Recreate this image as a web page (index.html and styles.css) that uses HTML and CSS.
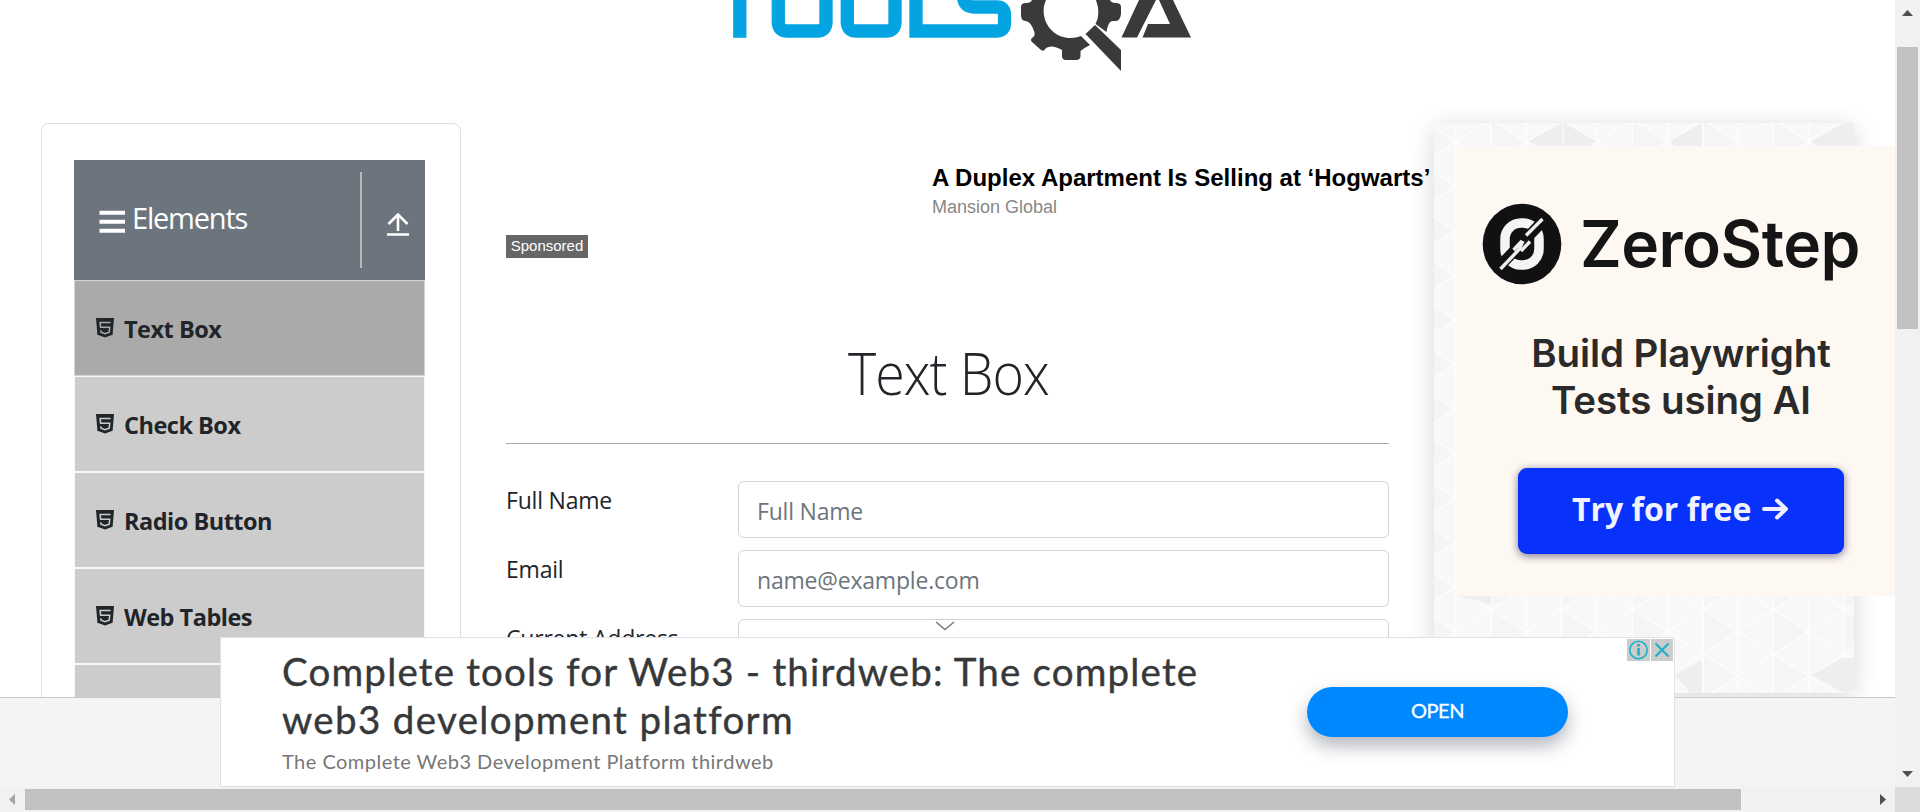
FILE: index.html
```html
<!DOCTYPE html>
<html lang="en">
<head>
<meta charset="utf-8">
<title>ToolsQA - Text Box</title>
<link rel="stylesheet" href="styles.css">
</head>
<body>
<svg width="0" height="0" class="defs">
  <symbol id="html5" viewBox="0 0 18 20"><path d="M0 0H18L16.6 16.8L9 19.5L1.4 16.8Z" fill="#212529"/><path d="M14.6 4.400H4.100L4.600 9.200H13.700L13.200 14.200L9 15.600L5 14.200L4.800 12.200" fill="none" stroke="var(--ink)" stroke-width="1.500"/></symbol>
</svg>
<div class="window">
  <div class="view">
    <header class="top">
      <svg class="logo" width="470" height="75" viewBox="730 0 470 75">
        <g fill="none" stroke="#04a3e1" stroke-width="13.3">
          <path d="M739.800 0V37.800"/>
          <path d="M778.300 0V22Q778.300 31 787.300 31H817Q826 31 826 22V0"/>
          <path d="M847.300 0V22Q847.300 31 856.300 31H886Q895 31 895 22V0"/>
          <path d="M916 0V31H997Q1004.500 31 1004.500 23V15Q1004.500 7 997 7H974Q963.500 7 963.500 -4"/>
        </g>
        <g fill="#3a3a3a">
          <path d="M1046 0A27 27 0 0 0 1081 36L1090 45Q1084 48 1080.500 51V56Q1080.500 60 1076 60H1066Q1062 60 1062 56V50Q1052 44 1046 48Q1044 52 1041 50L1032 42Q1030 40 1032 38Q1036 36 1034 31Q1031 22 1026 21Q1021 21 1021 15V7Q1021 3 1026 3Q1031 3 1032 0Z"/>
          <path d="M1096 0Q1101 14 1095.500 24L1106.500 32Q1108 22 1112 21H1116Q1120 21 1121 14V7Q1121 3 1116 3Q1111 3 1110 0Z"/>
          <path d="M1095 25L1121 50V71L1085.500 34Z"/>
          <path d="M1136 0H1156L1137 37.500H1121.500L1139 0Z"/>
          <path d="M1159 0H1173L1191 37.500H1142.500L1148 24H1170Z"/>
        </g>
      </svg>
    </header>
    <div class="columns">
      <nav class="side">
        <div class="side-head">
          <svg width="27" height="24" viewBox="0 0 27 24"><path d="M0.500 2.700H26M0.500 11.700H26M0.500 20.700H26" stroke="#fff" stroke-width="4"/></svg>
          <span class="side-title">Elements</span>
          <span class="divider"></span>
          <svg class="up" width="22" height="24" viewBox="0 0 22 24"><path d="M11 18V1.500M1.500 11L11 1.500L20.500 11M0 21.500H22" fill="none" stroke="#fff" stroke-width="2.600"/></svg>
        </div>
        <ul class="menu">
          <li class="item active"><svg width="18" height="20"><use href="#html5"/></svg><span>Text Box</span></li>
          <li class="item"><svg width="18" height="20"><use href="#html5"/></svg><span>Check Box</span></li>
          <li class="item"><svg width="18" height="20"><use href="#html5"/></svg><span>Radio Button</span></li>
          <li class="item"><svg width="18" height="20"><use href="#html5"/></svg><span>Web Tables</span></li>
          <li class="item"></li>
        </ul>
      </nav>
      <main class="main">
        <section class="native">
          <h2>A Duplex Apartment Is Selling at ‘Hogwarts’</h2>
          <p>Mansion Global</p>
          <span class="tag">Sponsored</span>
        </section>
        <h1><span>Text Box</span></h1>
        <form class="form">
          <label>Full Name</label><input placeholder="Full Name">
          <label>Email</label><input placeholder="name@example.com">
          <label>Current Address</label><input>
        </form>
      </main>
      <aside class="rail">
        <svg class="pattern" width="420" height="570">
          <defs>
            <pattern id="tri" x="57" y="-3.600" width="70.600" height="44.550" patternUnits="userSpaceOnUse">
              <rect width="70.600" height="44.550" fill="#f8f8f8"/>
              <path d="M0 0L35.300 22.300L0 44.550Z" fill="#f5f5f5"/>
              <path d="M0 0V44.550M35.300 0V44.550M70.600 0V44.550M0 0L70.600 44.550M70.600 0L0 44.550" stroke="#fdfdfd" stroke-width="1.800" fill="none"/>
            </pattern>
          </defs>
          <rect width="420" height="570" fill="url(#tri)"/>
          <path d="M95 18L128 0V23H103ZM130 0L162 18L156 23H130ZM236 18L268 0V23H240ZM377 18L410 0H420V23H382ZM241 552L268 537V570H256ZM377 552L409 535H420V568L410 570ZM24 473H57V481Z" fill="#eee"/>
        </svg>
        <div class="zs">
          <div class="zs-brand">
            <svg width="80" height="82" viewBox="0 0 80 82"><ellipse cx="40" cy="41" rx="39.300" ry="40.300" fill="#111"/><rect x="23" y="20" width="34" height="42" rx="16" fill="none" stroke="#f4f4f4" stroke-width="9.500"/><path d="M16 65L62 17" stroke="#111" stroke-width="11"/><path d="M18.500 66L37 46.500L41 38M31.500 47L40 38M44 32.500L60.500 16M39 48L48 38.500" fill="none" stroke="#eee" stroke-width="3.400"/></svg>
            <span>ZeroStep</span>
          </div>
          <p class="zs-l1">Build Playwright</p>
          <p class="zs-l2">Tests using AI</p>
          <div class="zs-btn"><span>Try for free</span><svg width="27" height="22" viewBox="0 0 27 22"><path d="M2 11H24M15 2.500L24 11L15 19.500" fill="none" stroke="#eef" stroke-width="4" stroke-linecap="round" stroke-linejoin="round"/></svg></div>
        </div>
      </aside>
    </div>
    <footer class="foot"></footer>
    <svg class="chev" width="20" height="10" viewBox="0 0 20 10"><path d="M1 1L10 8.500L19 1" fill="none" stroke="#777" stroke-width="1.500"/></svg>
    <section class="banner">
      <div class="copy">
        <p class="b-title b1">Complete tools for Web3 - thirdweb: The complete</p>
        <p class="b-title b2">web3 development platform</p>
        <p class="b-sub">The Complete Web3 Development Platform thirdweb</p>
      </div>
      <div class="open">OPEN</div>
      <div class="choices">
        <svg width="23" height="22" viewBox="0 0 23 22"><rect width="23" height="22" fill="#ccc"/><circle cx="11.500" cy="11" r="8.700" fill="none" stroke="#1ab1ca" stroke-width="1.600"/><path d="M11.500 9V16.500" stroke="#1ab1ca" stroke-width="2.600"/><circle cx="11.500" cy="6.300" r="1.500" fill="#1ab1ca"/></svg>
        <svg width="22" height="22" viewBox="0 0 22 22"><rect width="22" height="22" fill="#ccc"/><path d="M4.500 4.500L17.500 17.500M17.500 4.500L4.500 17.500" stroke="#1ab1ca" stroke-width="2"/></svg>
      </div>
    </section>
  </div>
  <div class="vbar">
    <svg width="11" height="6"><path d="M0 6L5.500 0L11 6Z" fill="#505050"/></svg>
    <div class="vthumb"></div>
    <svg class="down" width="11" height="6"><path d="M0 0L5.500 6L11 0Z" fill="#505050"/></svg>
  </div>
  <div class="hbar">
    <svg width="6" height="11"><path d="M6 0L0 5.500L6 11Z" fill="#a3a3a3"/></svg>
    <div class="hthumb"></div>
    <svg class="right" width="6" height="11"><path d="M0 0L6 5.500L0 11Z" fill="#505050"/></svg>
  </div>
  <div class="corner"></div>
</div>
</body>
</html>
```
FILE: styles.css
```css
* { box-sizing: border-box; }
body { margin: 0; background: #fff; font-family: "Open Sans", "Noto Sans", sans-serif; color: #212529; overflow: hidden; }
h1, h2, p, ul { margin: 0; padding: 0; font-weight: normal; }
ul { list-style: none; }
svg { display: block; flex: none; }
.defs { position: absolute; }
.window { display: grid; grid-template: 787px 25px / 1895px 25px; width: 1920px; height: 812px; }
.view { position: relative; overflow: hidden; display: flex; flex-direction: column; }

.top { height: 100px; flex: none; padding-left: 730px; }
.columns { height: 597px; flex: none; display: flex; overflow: hidden; padding: 23px 0 0 41px; }

.side { width: 420px; height: 600px; flex: none; border: 1px solid #dfdfdf; border-radius: 8px; padding: 36px 35px 0 32px; }
.side-head { height: 120px; background: #6c757d; color: #fff; display: flex; align-items: center; padding-left: 25px; width: 351px; }
.side-head > svg:first-child { margin-top: 3px; }
.side-title { font-size: 29px; letter-spacing: -1.2px; line-height: 40px; margin: -4px 0 0 6px; width: 201px; white-space: nowrap; }
.divider { width: 2px; height: 96px; background: #b9b9b9; margin-left: 27px; }
.up { margin: 9px 0 0 25px; }
.menu { width: 351px; }
.item { --ink: #ccc; height: 96px; background: #ccc; border: 1px solid #f8f8f8; display: flex; padding: 37px 0 0 21px; gap: 10px; font-weight: 700; font-size: 23.5px; letter-spacing: -0.5px; line-height: 22px; white-space: nowrap; }
.active { --ink: #aaa; background: #aaa; border-color: #ced4da; }

.main { width: 883px; margin-left: 45px; flex: none; }
.native { height: 157px; padding: 41px 0 0 426px; font-family: "Liberation Sans", Arial, sans-serif; position: relative; }
.native h2 { font-size: 24px; line-height: 28px; font-weight: 700; color: #000; white-space: nowrap; }
.native p { font-size: 18px; line-height: 20px; color: #888; margin-top: 5px; }
.tag { position: absolute; left: 0; top: 112px; width: 82px; height: 23px; line-height: 22px; background: #666; color: #fff; font-size: 15px; text-align: center; }
.main h1 { height: 164px; border-bottom: 1px solid #aaa; font-size: 59px; line-height: 80px; font-weight: 300; text-align: center; padding: 52px 0 0 2px; }
.main h1 span { display: inline-block; letter-spacing: -1px; transform: scaleX(.91); }
.form { margin-top: 37px; display: grid; grid-template-columns: 232px 651px; row-gap: 12px; align-items: start; }
.form label { font-size: 23px; line-height: 32px; padding-top: 3px; letter-spacing: -0.2px; white-space: nowrap; }
.form input { width: 651px; height: 57px; border: 1px solid #ced4da; border-radius: 6px; padding: 2px 18px 0; font: 23px "Open Sans", sans-serif; letter-spacing: -0.2px; background: #fff; }
.form input::placeholder { color: #6c757d; opacity: 1; }

.rail { position: relative; width: 420px; height: 570px; flex: none; margin-left: 45px; border-radius: 6px 6px 0 0; box-shadow: 0 4px 24px 0 rgba(0,0,0,.16); padding: 23px 0 0 23px; background: #f8f8f8; }
.pattern { position: absolute; left: 0; top: 0; }
.zs { position: relative; width: 438px; height: 450px; background: #fef8f2; font-family: Inter, sans-serif; color: #151515; padding-top: 57px; }
.zs-brand { display: flex; align-items: center; padding-left: 25px; height: 82px; }
.zs-brand span { font-size: 64px; font-weight: 600; letter-spacing: -0.5px; margin-left: 18px; line-height: 70px; }
.zs p { font-size: 38.5px; line-height: 47px; font-weight: 600; letter-spacing: -0.1px; text-align: center; white-space: nowrap; color: #2a2a2a; padding-left: 10px; }
.zs .zs-l1 { margin-top: 45px; }
.zs-btn { width: 326px; height: 86px; margin: 44px 0 0 61px; background: #0832fb; border-radius: 9px; box-shadow: 0 2px 8px rgba(40,30,80,.6); color: #f0f2ff; display: flex; align-items: center; padding: 0 0 5px 54px; gap: 11px; font: 700 32px "Open Sans", sans-serif; white-space: nowrap; }

.foot { flex: 1; background: #f4f4f4; border-top: 1px solid #c8c8c8; }
.chev { position: absolute; left: 935px; top: 621px; }
.banner { position: absolute; left: 220px; top: 637px; width: 1455px; height: 150px; background: #fff; border: 1px solid #e2e2e4; font-family: Lato, sans-serif; font-variant-ligatures: none; display: flex; }
.copy { width: 1086px; padding: 9px 0 0 61px; white-space: nowrap; }
.b-title { font-size: 38.5px; line-height: 48px; color: #37383a; font-weight: 400; -webkit-text-stroke: .4px #37383a; }
.b1 { letter-spacing: 1.18px; }
.b2 { letter-spacing: 1.35px; }
.b-sub { font-size: 20px; line-height: 28px; color: #777; margin-top: 4px; letter-spacing: .48px; }
.open { width: 261px; height: 50px; margin-top: 49px; border-radius: 25px; background: #0089ff; color: #fff; font-size: 20px; letter-spacing: -0.5px; -webkit-text-stroke: .3px #fff; line-height: 47px; text-align: center; box-shadow: 0 9px 18px rgba(40,45,70,.35); }
.choices { position: absolute; right: 1px; top: 1px; display: flex; gap: 1px; }

.vbar { background: #f1f1f1; display: flex; flex-direction: column; align-items: center; padding: 10px 1px 0 0; }
.vthumb { width: 21px; height: 282px; margin: 31px 0 0 1px; background: #c1c1c1; }
.down { margin-top: 442px; }
.hbar { background: #f1f1f1; display: flex; align-items: center; padding-left: 9px; }
.hthumb { width: 1716px; height: 21px; background: #c1c1c1; margin-left: 10px; }
.right { margin-left: 139px; }
.corner { background: #dcdcdc; }
```
